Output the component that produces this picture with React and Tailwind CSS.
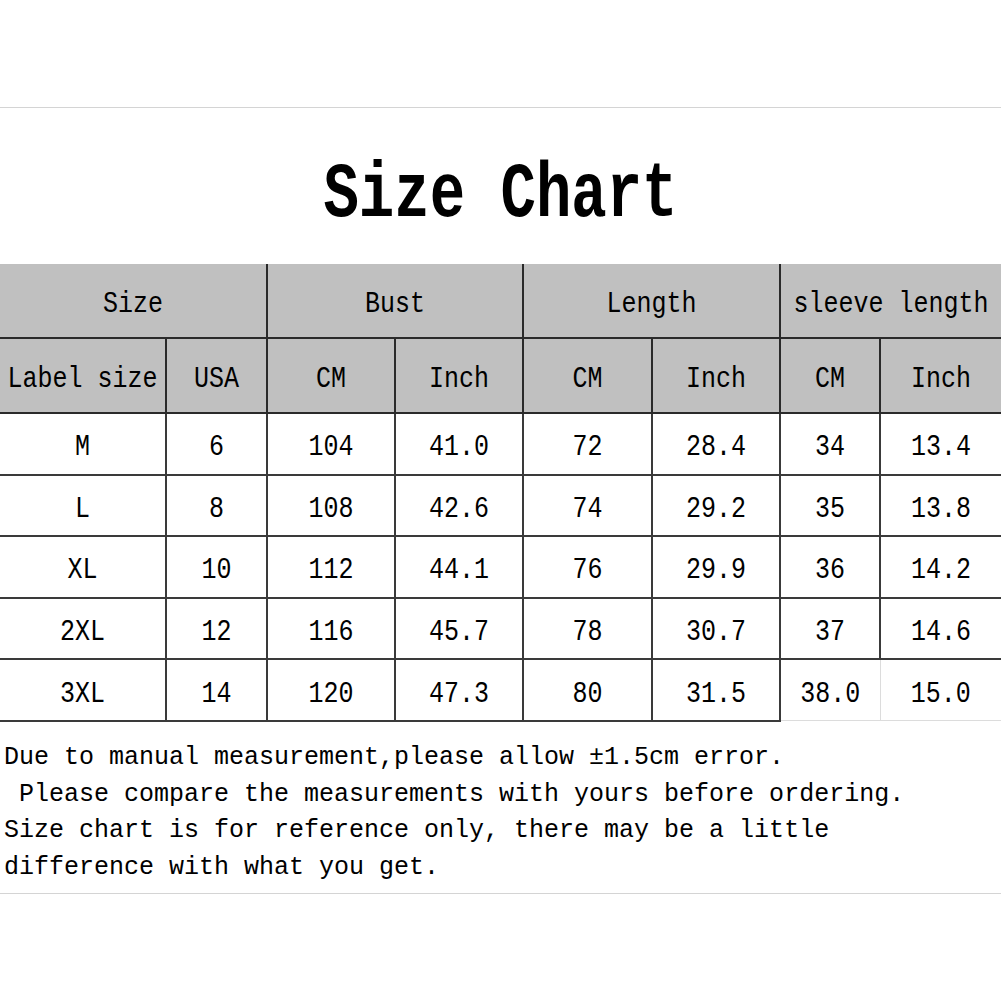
const mono = { fontFamily: '"Liberation Mono", "DejaVu Sans Mono", monospace' };

const rows = [
  ['M', '6', '104', '41.0', '72', '28.4', '34', '13.4'],
  ['L', '8', '108', '42.6', '74', '29.2', '35', '13.8'],
  ['XL', '10', '112', '44.1', '76', '29.9', '36', '14.2'],
  ['2XL', '12', '116', '45.7', '78', '30.7', '37', '14.6'],
  ['3XL', '14', '120', '47.3', '80', '31.5', '38.0', '15.0'],
];

const widths = [166, 101, 128, 128, 129, 128, 100, 121];

function T({ children }) {
  return <span className="inline-block scale-y-120 translate-y-[4px] whitespace-pre">{children}</span>;
}

export default function App() {
  return (
    <div className="w-[1001px] h-[1001px] bg-white text-black overflow-hidden" style={mono}>
      <div className="h-[107px]" />
      <div className="border-t border-b border-[#d4d4d4] h-[787px] flex flex-col">
        <div className="h-[156px] flex items-center justify-center pt-[18px]">
          <h1 className="text-[59px] font-bold leading-none">
            <span className="inline-block scale-y-133">Size Chart</span>
          </h1>
        </div>

        <table className="table-fixed border-collapse w-[1001px] text-[25px] leading-none">
          <colgroup>
            {widths.map((w, i) => (
              <col key={i} style={{ width: w }} />
            ))}
          </colgroup>
          <thead>
            <tr className="bg-[#c0c0c0] h-[74px]">
              <th colSpan={2} className="font-normal border-r-2 border-[#2a2a2a] text-center">
                <T>Size</T>
              </th>
              <th colSpan={2} className="font-normal border-r-2 border-[#2a2a2a] text-center">
                <T>Bust</T>
              </th>
              <th colSpan={2} className="font-normal border-r-2 border-[#2a2a2a] text-center">
                <T>Length</T>
              </th>
              <th colSpan={2} className="font-normal text-center">
                <T>sleeve length</T>
              </th>
            </tr>
            <tr className="bg-[#c0c0c0] h-[75px]">
              {['Label size', 'USA', 'CM', 'Inch', 'CM', 'Inch', 'CM', 'Inch'].map((h, i) => (
                <th
                  key={i}
                  className={`font-normal text-center border-t-2 border-b-2 border-[#2a2a2a] ${i < 7 ? 'border-r-2' : ''}`}
                >
                  <T>{h}</T>
                </th>
              ))}
            </tr>
          </thead>
          <tbody>
            {rows.map((r, ri) => {
              const last = ri === rows.length - 1;
              return (
                <tr key={ri} className="h-[61.6px]">
                  {r.map((c, ci) => {
                    let cls = 'text-center border-b-2 border-[#3a3a3a]';
                    if (ci < 7) cls += ' border-r-2';
                    if (last && ci >= 6) cls = 'text-center border-b border-[#dcdcdc]' + (ci === 6 ? ' border-r' : '');
                    return (
                      <td key={ci} className={cls}>
                        <T>{c}</T>
                      </td>
                    );
                  })}
                </tr>
              );
            })}
          </tbody>
        </table>

        <div className="pl-[4px] pt-[18px] text-[25px] leading-[36.7px]">
          <p className="whitespace-pre">Due to manual measurement,please allow ±1.5cm error.</p>
          <p className="whitespace-pre"> Please compare the measurements with yours before ordering.</p>
          <p className="whitespace-pre">Size chart is for reference only, there may be a little</p>
          <p className="whitespace-pre">difference with what you get.</p>
        </div>
      </div>
    </div>
  );
}
